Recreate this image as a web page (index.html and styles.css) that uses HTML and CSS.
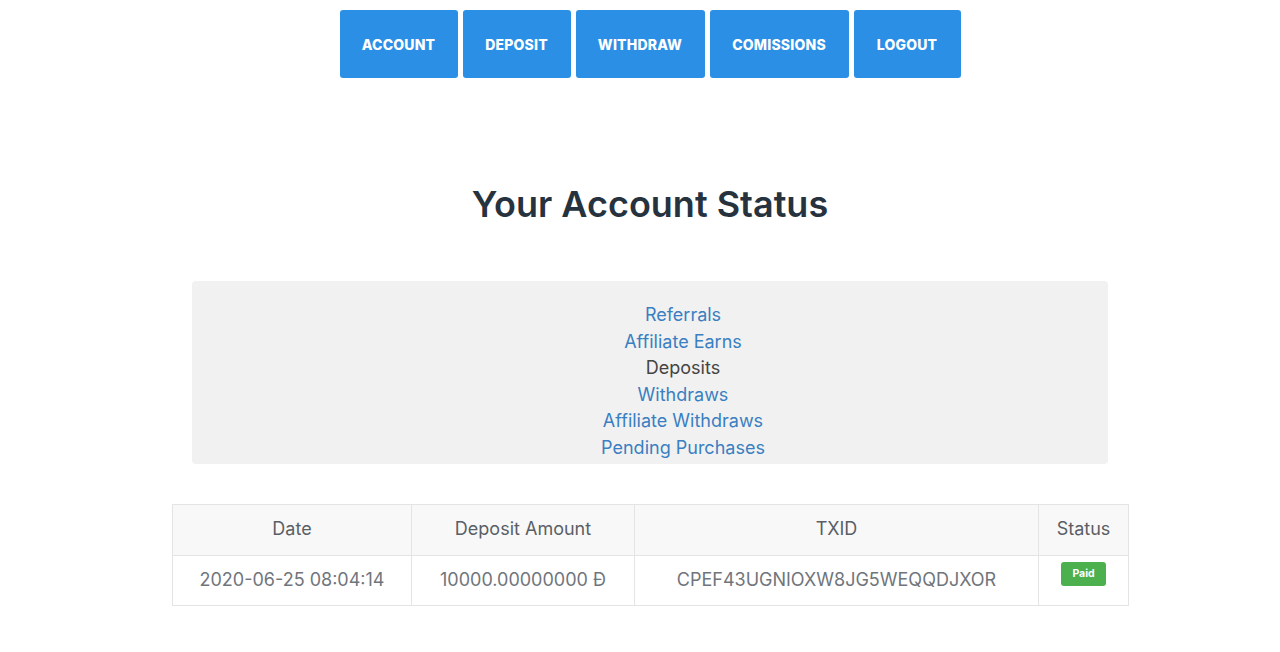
FILE: index.html
```html
<!DOCTYPE html>
<html>
<head>
<meta charset="utf-8">
<link rel="stylesheet" href="styles.css">
</head>
<body>
<nav class="nav">
  <a class="btn w-account" href="#">ACCOUNT</a>
  <a class="btn w-deposit" href="#">DEPOSIT</a>
  <a class="btn w-withdraw" href="#">WITHDRAW</a>
  <a class="btn w-comissions" href="#">COMISSIONS</a>
  <a class="btn w-logout" href="#">LOGOUT</a>
</nav>
<h1 class="title">Your Account Status</h1>
<div class="panel">
  <ul class="links">
    <li><a href="#">Referrals</a></li>
    <li><a href="#">Affiliate Earns</a></li>
    <li class="current">Deposits</li>
    <li><a href="#">Withdraws</a></li>
    <li><a href="#">Affiliate Withdraws</a></li>
    <li><a href="#">Pending Purchases</a></li>
  </ul>
</div>
<table class="tbl">
  <thead>
    <tr>
      <th class="c-date">Date</th>
      <th class="c-amount">Deposit Amount</th>
      <th class="c-txid">TXID</th>
      <th class="c-status">Status</th>
    </tr>
  </thead>
  <tbody>
    <tr>
      <td>2020-06-25 08:04:14</td>
      <td>10000.00000000 Đ</td>
      <td>CPEF43UGNIOXW8JG5WEQQDJXOR</td>
      <td class="status-cell"><span class="badge">Paid</span></td>
    </tr>
  </tbody>
</table>
</body>
</html>
```
FILE: styles.css
```css
html, body {
  margin: 0;
  padding: 0;
  background: #fff;
  font-family: "Inter", "Lato", sans-serif;
}
.nav {
  display: flex;
  justify-content: center;
  gap: 5px;
  padding-top: 10px;
  margin-left: 20px;
}
.btn {
  display: flex;
  align-items: center;
  justify-content: center;
  height: 68px;
  background: #2b8fe6;
  color: #fff;
  border-radius: 3px;
  text-decoration: none;
  font-weight: 800;
  font-size: 14px;
  letter-spacing: 0.2px;
  padding-top: 1px;
  box-sizing: border-box;
}
.w-account { width: 118px; }
.w-deposit { width: 108px; }
.w-withdraw { width: 129px; }
.w-comissions { width: 139px; }
.w-logout { width: 107px; }
.title {
  margin: 104px 0 0 20px;
  text-align: center;
  font-size: 36px;
  font-weight: 600;
  color: #27323f;
  line-height: 44px;
}
.panel {
  width: 916px;
  margin: 55px 0 0 192px;
  background: #f1f1f1;
  border-radius: 4px;
  box-sizing: border-box;
  padding: 21px 0 3px 66px;
}
.links {
  list-style: none;
  margin: 0;
  padding: 0;
  text-align: center;
  font-size: 18px;
  line-height: 26.5px;
}
.links a {
  color: #3a7fc1;
  text-decoration: none;
}
.links .current {
  color: #444;
}
.tbl {
  margin: 40px 0 0 172px;
  width: 956px;
  border-collapse: collapse;
  font-size: 18px;
  color: #70757c;
  table-layout: fixed;
}
.tbl th, .tbl td {
  border: 1px solid #e4e4e4;
  text-align: center;
  padding: 0;
}
.tbl th {
  height: 47px;
  padding-bottom: 3px;
  font-weight: 400;
  color: #5a5f66;
  background: #f8f8f8;
}
.tbl td {
  height: 47px;
  padding-bottom: 2px;
}
.tbl td.status-cell {
  vertical-align: top;
  padding: 6px 0 0;
  height: 43px;
}
.c-date { width: 238px; }
.c-amount { width: 222px; }
.c-txid { width: 403px; }
.c-status { width: 89px; }
.badge {
  display: inline-block;
  vertical-align: top;
  background: #4cb04f;
  color: #fff;
  font-size: 10.5px;
  font-weight: 700;
  padding: 6px 11px;
  border-radius: 3px;
  line-height: 12px;
}
```
